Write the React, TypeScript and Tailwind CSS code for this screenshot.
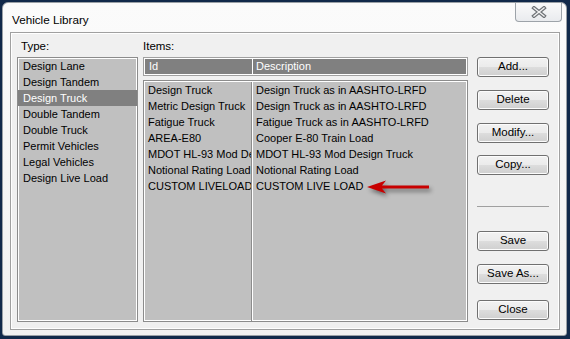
import React from 'react';

const types = [
  'Design Lane',
  'Design Tandem',
  'Design Truck',
  'Double Tandem',
  'Double Truck',
  'Permit Vehicles',
  'Legal Vehicles',
  'Design Live Load',
];

const items: [string, string][] = [
  ['Design Truck', 'Design Truck as in AASHTO-LRFD'],
  ['Metric Design Truck', 'Design Truck as in AASHTO-LRFD'],
  ['Fatigue Truck', 'Fatigue Truck as in AASHTO-LRFD'],
  ['AREA-E80', 'Cooper E-80 Train Load'],
  ['MDOT HL-93 Mod Design Truck', 'MDOT HL-93 Mod Design Truck'],
  ['Notional Rating Load', 'Notional Rating Load'],
  ['CUSTOM LIVELOAD', 'CUSTOM LIVE LOAD'],
];

const WinButton: React.FC<{ label: string; className?: string }> = ({ label, className = '' }) => (
  <button
    className={`h-[20px] w-[72px] rounded-[3px] border border-[#707070] bg-[linear-gradient(to_bottom,#f2f2f2_0%,#ebebeb_50%,#dddddd_51%,#cfcfcf_100%)] text-[11.5px] leading-none text-black shadow-[inset_0_0_0_1px_#fcfcfc] ${className}`}
  >
    {label}
  </button>
);

const CloseGlyph = () => (
  <svg width="16" height="12" viewBox="0 0 16 12">
    <path d="M3 2 L13 10 M13 2 L3 10" stroke="#6f7377" strokeWidth="3.8" strokeLinecap="square" fill="none" />
    <path d="M3 2 L13 10 M13 2 L3 10" stroke="#f2f2f2" strokeWidth="1.4" strokeLinecap="square" fill="none" />
  </svg>
);

const Arrow = () => (
  <svg
    width="64"
    height="14"
    viewBox="0 0 64 14"
    className="absolute left-[223px] top-[99px] drop-shadow-[2px_3px_2px_rgba(0,0,0,0.45)]"
  >
    <polygon points="0,7 19,0.5 15,5.5 62,5.5 62,8.5 15,8.5 19,13.5" fill="#c80000" />
  </svg>
);

export default function App() {
  return (
    <div
      className="h-[339px] w-[570px] bg-[#11294a] pb-[3px] pl-[2px] pr-[3px] pt-[2px] text-black"
      style={{ fontFamily: '"Liberation Sans", Arial, sans-serif' }}
    >
      <div className="flex h-full flex-col rounded-t-[6px] rounded-b-[3px] border border-[#9aa0a6] bg-[linear-gradient(to_bottom,#fbfbfb,#f1f1f1)]">
        {/* title bar */}
        <div className="flex h-[29px] items-start justify-between">
          <span className="ml-[9px] mt-[8px] text-[11.7px]">Vehicle Library</span>
          <div className="mr-[4px] flex h-[19px] w-[47px] items-center justify-center rounded-b-[4px] border border-t-0 border-[#9da3a9] bg-[linear-gradient(to_bottom,#fafafa,#e9ebee)]">
            <CloseGlyph />
          </div>
        </div>

        {/* client area */}
        <div className="mb-[5px] ml-[7px] mr-[6px] flex flex-1 border border-[#a0a0a0] bg-[#f0f0f0] pb-[7px] pl-[6px] pt-[5px] shadow-[inset_0_0_0_1px_#ffffff]">
          {/* type column */}
          <div className="flex w-[121px] flex-col">
            <div className="h-[16px] pl-[4px] text-[11.5px] leading-[16px]">Type:</div>
            <div className="mt-[3px] flex-1 border border-[#8c8c8c] bg-[#c0c0c0] shadow-[inset_0_0_0_1px_#ffffff]">
              {types.map((t) => (
                <div
                  key={t}
                  className={`h-[16px] pl-[5px] text-[11px] leading-[16px] ${
                    t === 'Design Truck' ? 'bg-[#808080] text-white' : ''
                  }`}
                >
                  {t}
                </div>
              ))}
            </div>
          </div>

          {/* items column */}
          <div className="ml-[5px] flex w-[325px] flex-col">
            <div className="h-[16px] text-[11.5px] leading-[16px]">Items:</div>
            <div className="mt-[3px] flex h-[19px] border border-[#a0a0a0] bg-[#808080] text-[11px] leading-[17px] text-white shadow-[inset_0_0_0_1px_#ffffff]">
              <div className="w-[109px] border-r border-white pl-[5px]">Id</div>
              <div className="flex-1 pl-[3px]">Description</div>
            </div>
            <div className="relative mt-[4px] flex flex-1 border border-[#8c8c8c] bg-[#c0c0c0] pt-[1px] shadow-[inset_0_0_0_1px_#ffffff]">
              <div className="w-[108px] overflow-hidden border-r border-[#8c8c8c] pl-[4px]">
                {items.map(([id]) => (
                  <div key={id} className="h-[16px] whitespace-nowrap text-[11px] leading-[16px]">
                    {id}
                  </div>
                ))}
              </div>
              <div className="flex-1 border-l border-white pl-[3px]">
                {items.map(([id, desc]) => (
                  <div key={id} className="h-[16px] whitespace-nowrap text-[11px] leading-[16px]">
                    {desc}
                  </div>
                ))}
              </div>
              <Arrow />
            </div>
          </div>

          {/* buttons */}
          <div className="ml-[9px] flex w-[72px] flex-col">
            <WinButton label="Add..." className="mt-[19px]" />
            <WinButton label="Delete" className="mt-[13px]" />
            <WinButton label="Modify..." className="mt-[13px]" />
            <WinButton label="Copy..." className="mt-[12px]" />
            <div className="mt-[31px] h-[2px] border-t border-[#a0a0a0] border-b-white" />
            <WinButton label="Save" className="mt-[23px]" />
            <WinButton label="Save As..." className="mt-[13px]" />
            <WinButton label="Close" className="mt-[16px]" />
          </div>
        </div>
      </div>
    </div>
  );
}
